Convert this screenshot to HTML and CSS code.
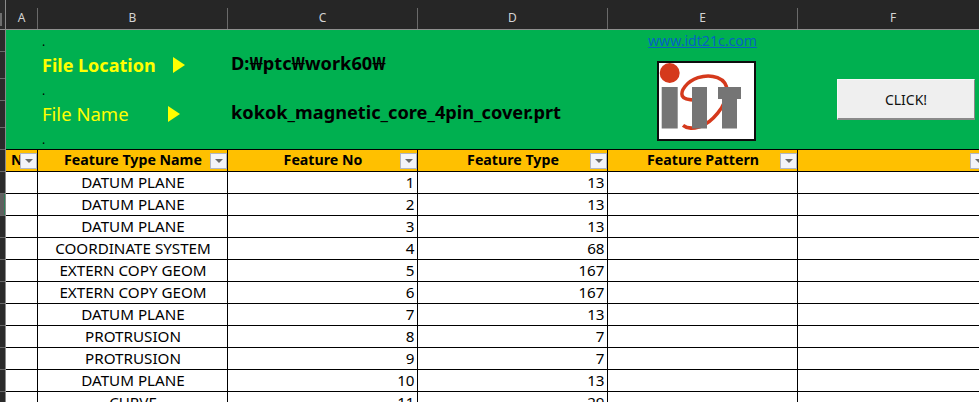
FILE: index.html
```html
<!DOCTYPE html>
<html lang="en">
<head>
<meta charset="utf-8">
<title>Feature sheet</title>
<link rel="stylesheet" href="styles.css">
</head>
<body>
<div class="sheet">
  <div class="rail">
    <div class="rail-top"><span class="corner"></span></div>
    <div class="rc"></div><div class="rc tall"></div><div class="rc"></div><div class="rc tall"></div><div class="rc"></div>
    <div class="rc"></div><div class="rc"></div><div class="rc sel"></div><div class="rc"></div><div class="rc"></div><div class="rc"></div><div class="rc"></div><div class="rc"></div><div class="rc"></div><div class="rc"></div><div class="rc"></div>
  </div>
  <div class="main">
    <div class="col-heads">
      <div class="ch a">A</div><div class="ch w">B</div><div class="ch w">C</div><div class="ch w">D</div><div class="ch w">E</div><div class="ch f">F</div>
    </div>
    <div class="banner">
      <div class="labels">
        <div class="dot">.</div>
        <div class="file-row bold"><span class="lab loc">File Location</span><span class="tri"></span></div>
        <div class="dot">.</div>
        <div class="file-row"><span class="lab nam">File Name</span><span class="tri"></span></div>
        <div class="dot">.</div>
      </div>
      <div class="values">
        <div class="val">D:₩ptc₩work60₩</div>
        <div class="val">kokok_magnetic_core_4pin_cover.prt</div>
      </div>
      <div class="logo-col">
        <a class="link" href="#">www.idt21c.com</a>
        <div class="logo">
          <svg width="95" height="76" viewBox="0 0 95 76">
            <rect width="95" height="76" fill="#fff"/>
            <path d="M24 62.3C29 66.3 34 65.7 40.7 63.7C52.3 60.3 68 43 68 28C68 14.7 52.3 10.3 39 14.7C27.3 18.7 21.3 28 23.3 33C24.7 36.3 30.7 37 37.3 37.3" fill="none" stroke="#d5391c" stroke-width="3.5"/>
            <circle cx="10.7" cy="10" r="10" fill="#d5391c"/>
            <rect x="2.7" y="24" width="16" height="41.5" fill="#757575"/>
            <rect x="33" y="24" width="15" height="41.5" fill="#757575"/>
            <path d="M59 24H82V36H78V65.5H63V36H59Z" fill="#757575"/>
          </svg>
        </div>
      </div>
      <div class="btn-col"><button class="click">CLICK!</button></div>
    </div>
    <table class="grid">
      <colgroup><col class="c1"><col class="c2"><col class="c2"><col class="c2"><col class="c2"><col class="c2"></colgroup>
      <thead>
        <tr>
          <th class="th-clip"><span class="th-n">N</span><span class="fb"></span></th>
          <th>Feature Type Name<span class="fb"></span></th>
          <th>Feature No<span class="fb"></span></th>
          <th>Feature Type<span class="fb"></span></th>
          <th>Feature Pattern<span class="fb"></span></th>
          <th><span class="fb"></span></th>
        </tr>
      </thead>
      <tbody>
        <tr><td></td><td class="ctr">DATUM PLANE</td><td class="num">1</td><td class="num">13</td><td></td><td></td></tr>
        <tr><td></td><td class="ctr">DATUM PLANE</td><td class="num">2</td><td class="num">13</td><td></td><td></td></tr>
        <tr><td></td><td class="ctr">DATUM PLANE</td><td class="num">3</td><td class="num">13</td><td></td><td></td></tr>
        <tr><td></td><td class="ctr">COORDINATE SYSTEM</td><td class="num">4</td><td class="num">68</td><td></td><td></td></tr>
        <tr><td></td><td class="ctr">EXTERN COPY GEOM</td><td class="num">5</td><td class="num">167</td><td></td><td></td></tr>
        <tr><td></td><td class="ctr">EXTERN COPY GEOM</td><td class="num">6</td><td class="num">167</td><td></td><td></td></tr>
        <tr><td></td><td class="ctr">DATUM PLANE</td><td class="num">7</td><td class="num">13</td><td></td><td></td></tr>
        <tr><td></td><td class="ctr">PROTRUSION</td><td class="num">8</td><td class="num">7</td><td></td><td></td></tr>
        <tr><td></td><td class="ctr">PROTRUSION</td><td class="num">9</td><td class="num">7</td><td></td><td></td></tr>
        <tr><td></td><td class="ctr">DATUM PLANE</td><td class="num">10</td><td class="num">13</td><td></td><td></td></tr>
        <tr><td></td><td class="ctr">CURVE</td><td class="num">11</td><td class="num">29</td><td></td><td></td></tr>
      </tbody>
    </table>
  </div>
</div>
</body>
</html>
```
FILE: styles.css
```css
html, body { margin: 0; padding: 0; background: #262626; }
body { width: 979px; height: 402px; overflow: hidden; font-family: "Noto Sans", "Noto Sans CJK KR", sans-serif; }
.sheet { display: flex; width: 979px; height: 402px; overflow: hidden; }
.rail { flex: 0 0 6px; box-sizing: border-box; background: #2b2b2b; border-right: 1px solid #8a8a8a; }
.rail-top { height: 30px; box-sizing: border-box; padding-top: 13px; border-bottom: 1px solid #8f8f8f; }
.corner { display: block; width: 2px; height: 13px; background: #6e6e6e; }
.rc { height: 22px; box-sizing: border-box; border-bottom: 1px solid #6a6a6a; }
.rc.tall { height: 27px; }
.rc.sel { background: #5f5f5f; box-shadow: inset -1px 0 #2f7d57; }
.main { flex: 1; min-width: 0; display: flex; flex-direction: column; }
.col-heads { display: flex; flex: 0 0 30px; box-sizing: border-box; padding-top: 8px; background: #262626; border-bottom: 1px solid #8f8f8f; }
.ch { box-sizing: border-box; border-right: 1px solid #6a6a6a; color: #d4d4d4; font-size: 12px; line-height: 20px; text-align: center; }
.ch.a { flex: 0 0 32px; }
.ch.w { flex: 0 0 190px; }
.ch.f { flex: 0 0 190px; border-right: 0; }
.banner { flex: 0 0 119px; display: flex; width: 973px; background: #00b050; }
.labels { flex: 0 0 192px; box-sizing: border-box; padding: 4px 0 0 36px; }
.dot { height: 12px; font-size: 12px; line-height: 16px; color: #000; }
.file-row { display: flex; align-items: center; height: 37px; color: #ffff00; font-size: 18px; }
.bold { font-weight: 700; }
.lab.loc { flex: 0 0 131px; }
.lab.nam { flex: 0 0 126px; font-size: 18.5px; }
.tri { width: 0; height: 0; border-left: 12px solid #ffff00; border-top: 8px solid transparent; border-bottom: 8px solid transparent; }
.values { flex: 0 0 409px; box-sizing: border-box; padding: 18px 0 0 33px; }
.val { height: 49px; font-size: 18.2px; line-height: 30px; font-weight: 700; color: #000; white-space: nowrap; }
.logo-col { flex: 0 0 190px; display: flex; flex-direction: column; }
.link { margin: 1px 0 0 41px; font-size: 14.1px; line-height: 20px; color: #0563c1; text-decoration: underline; }
.logo { box-sizing: content-box; width: 95px; height: 76px; margin: 10px 0 0 50px; border: 2px solid #0d0d0d; line-height: 0; }
.btn-col { flex: 1; padding: 49px 0 0 40px; }
.click { display: block; width: 138px; height: 41px; box-sizing: border-box; padding: 0; background: #efefef; border: 0; border-right: 1px solid #8a8a8a; border-bottom: 2px solid #8a8a8a; border-top: 1px solid #f8f8f8; border-left: 1px solid #f8f8f8; color: #111; font: 14px "Noto Sans", "Noto Sans CJK KR", sans-serif; }
.grid { border-collapse: collapse; table-layout: fixed; width: 981px; background: #fff; color: #000; font-size: 15.2px; }
.c1 { width: 31px; }
.c2 { width: 190px; }
.grid th, .grid td { height: 22px; box-sizing: border-box; padding: 0 2px 2px; border: 1px solid #000; line-height: 18px; white-space: nowrap; overflow: hidden; }
.grid tr > :first-child { border-left: 0; }
.grid th { position: relative; background: #ffc000; font-size: 14.2px; font-weight: 700; text-align: center; padding-left: 4px; }
.grid .th-clip { text-align: left; padding-left: 5px; }
.th-n { display: block; }
.fb { position: absolute; right: 0; top: 3px; width: 17px; height: 16px; box-sizing: border-box; background: #f3f4f8; border: 1px solid #b0b6c4; }
.fb::after { content: ""; position: absolute; left: 4px; top: 5px; border-left: 4px solid transparent; border-right: 4px solid transparent; border-top: 4px solid #6b6b6b; }
.grid .ctr { text-align: center; padding-left: 4px; }
.num { text-align: right; }
```
